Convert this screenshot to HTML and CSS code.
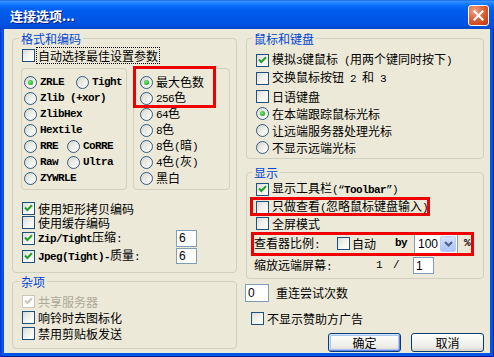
FILE: index.html
```html
<!DOCTYPE html>
<html lang="zh-CN">
<head>
<meta charset="utf-8">
<title>连接选项</title>
<link rel="stylesheet" href="styles.css">
</head>
<body>
<div class="win">
  <div class="titlebar">
    <span class="title-text">连接选项...</span>
    <span class="close"><svg width="11" height="11" viewBox="0 0 11 11"><path d="M1.5 1.5 L9.5 9.5 M9.5 1.5 L1.5 9.5" stroke="#fff" stroke-width="2.2" stroke-linecap="square"/></svg></span>
  </div>
  <div class="client">
    <div class="col">
      <fieldset class="grp g-fmt">
        <legend>格式和编码</legend>
        <div class="row r-auto"><span class="cb"></span><span class="lbl focus">自动选择最佳设置参数</span></div>
        <div class="boxes">
          <div class="ibox enc">
            <div class="rrow"><span class="ri w52"><span class="rb on"></span><span class="m b">ZRLE</span></span><span class="ri"><span class="rb"></span><span class="m b">Tight</span></span></div>
            <div class="rrow"><span class="ri"><span class="rb"></span><span class="m b">Zlib (+xor)</span></span></div>
            <div class="rrow"><span class="ri"><span class="rb"></span><span class="m b">ZlibHex</span></span></div>
            <div class="rrow"><span class="ri"><span class="rb"></span><span class="m b">Hextile</span></span></div>
            <div class="rrow"><span class="ri w43"><span class="rb"></span><span class="m b">RRE</span></span><span class="ri"><span class="rb"></span><span class="m b">CoRRE</span></span></div>
            <div class="rrow"><span class="ri w43"><span class="rb"></span><span class="m b">Raw</span></span><span class="ri"><span class="rb"></span><span class="m b">Ultra</span></span></div>
            <div class="rrow"><span class="ri"><span class="rb"></span><span class="m b">ZYWRLE</span></span></div>
          </div>
          <div class="ibox clr">
            <div class="rrow"><span class="ri"><span class="rb on"></span><span>最大色数</span></span></div>
            <div class="rrow"><span class="ri"><span class="rb"></span><span><span class="m">256</span>色</span></span></div>
            <div class="rrow"><span class="ri"><span class="rb"></span><span><span class="m">64</span>色</span></span></div>
            <div class="rrow"><span class="ri"><span class="rb"></span><span><span class="m">8</span>色</span></span></div>
            <div class="rrow"><span class="ri"><span class="rb"></span><span><span class="m">8</span>色<span class="m">(</span>暗<span class="m">)</span></span></span></div>
            <div class="rrow"><span class="ri"><span class="rb"></span><span><span class="m">4</span>色<span class="m">(</span>灰<span class="m">)</span></span></span></div>
            <div class="rrow"><span class="ri"><span class="rb"></span><span>黑白</span></span></div>
          </div>
        </div>
        <div class="row h16 mt10"><span class="cb"><svg width="11" height="11" viewBox="0 0 11 11"><path d="M2 4.5 L4.3 7 L9 2.3" fill="none" stroke="#21A121" stroke-width="2"/></svg></span><span class="lbl">使用矩形拷贝编码</span></div>
        <div class="row h13"><span class="cb"></span><span class="lbl">使用缓存编码</span></div>
        <div class="row h18"><span class="lblw"><span class="cb"><svg width="11" height="11" viewBox="0 0 11 11"><path d="M2 4.5 L4.3 7 L9 2.3" fill="none" stroke="#21A121" stroke-width="2"/></svg></span><span class="lbl"><span class="m b">Zip/Tight</span>压缩<span class="m">:</span></span></span><span class="inp w21">6</span></div>
        <div class="row h18"><span class="lblw"><span class="cb"><svg width="11" height="11" viewBox="0 0 11 11"><path d="M2 4.5 L4.3 7 L9 2.3" fill="none" stroke="#21A121" stroke-width="2"/></svg></span><span class="lbl"><span class="m b">Jpeg(Tight)-</span>质量<span class="m">:</span></span></span><span class="inp w21 h16i">6</span></div>
      </fieldset>
      <fieldset class="grp g-misc">
        <legend>杂项</legend>
        <div class="row h16"><span class="cb dis"><svg width="11" height="11" viewBox="0 0 11 11"><path d="M2 4.5 L4.3 7 L9 2.3" fill="none" stroke="#CAC8BB" stroke-width="2"/></svg></span><span class="lbl dtext">共享服务器</span></div>
        <div class="row h16"><span class="cb"></span><span class="lbl">响铃时去图标化</span></div>
        <div class="row h16"><span class="cb"></span><span class="lbl">禁用剪贴板发送</span></div>
      </fieldset>
    </div>
    <div class="col">
      <fieldset class="grp g-mouse">
        <legend>鼠标和键盘</legend>
        <div class="row h18"><span class="cb"><svg width="11" height="11" viewBox="0 0 11 11"><path d="M2 4.5 L4.3 7 L9 2.3" fill="none" stroke="#21A121" stroke-width="2"/></svg></span><span class="lbl">模拟<span class="m">3</span>键鼠标<span class="m"> (</span>用两个键同时按下<span class="m">)</span></span></div>
        <div class="row h18"><span class="cb"></span><span class="lbl">交换鼠标按钮<span class="m"> 2 </span>和<span class="m"> 3</span></span></div>
        <div class="row h18"><span class="cb"></span><span class="lbl">日语键盘</span></div>
        <div class="row h17"><span class="rb on"></span><span class="lbl">在本端跟踪鼠标光标</span></div>
        <div class="row h17"><span class="rb"></span><span class="lbl">让远端服务器处理光标</span></div>
        <div class="row h17"><span class="rb"></span><span class="lbl">不显示远端光标</span></div>
      </fieldset>
      <fieldset class="grp g-disp">
        <legend>显示</legend>
        <div class="row h18"><span class="cb"><svg width="11" height="11" viewBox="0 0 11 11"><path d="M2 4.5 L4.3 7 L9 2.3" fill="none" stroke="#21A121" stroke-width="2"/></svg></span><span class="lbl">显示工具栏<span class="m">(“</span><span class="m b">Toolbar</span><span class="m">”)</span></span></div>
        <div class="row h18"><span class="cb"></span><span class="lbl">只做查看<span class="m">(</span>忽略鼠标键盘输入<span class="m">)</span></span></div>
        <div class="row h15"><span class="cb"></span><span class="lbl">全屏模式</span></div>
        <div class="row h25 pl7">
          <span class="lab83">查看器比例<span class="m">:</span></span>
          <span class="cb"></span><span class="lbl auto">自动</span>
          <span class="m b by">by</span>
          <span class="sel"><span class="sel-v">100</span><span class="sel-b"><svg width="9" height="6" viewBox="0 0 9 6"><path d="M1 1 L4.5 4.5 L8 1" fill="none" stroke="#4D6185" stroke-width="2"/></svg></span></span>
          <span class="m b pct">%</span>
        </div>
        <div class="row h19 pl7">
          <span class="lab122">缩放远端屏幕<span class="m">:</span></span>
          <span class="m">1</span>
          <span class="m slash">/</span>
          <span class="inp w21 ml14">1</span>
        </div>
      </fieldset>
      <div class="row retry"><span class="inp w24">0</span><span class="retry-t">重连尝试次数</span></div>
      <div class="row sponsor"><span class="cb"></span><span class="lbl">不显示赞助方广告</span></div>
      <div class="btns"><span class="btn def">确定</span><span class="btn">取消</span></div>
    </div>
  </div>
  <div class="mark mk1"></div>
  <div class="mark mk2"></div>
  <div class="mark mk3"></div>
</div>
</body>
</html>
```

FILE: styles.css
```css
* { box-sizing: border-box; }
html, body { margin: 0; padding: 0; background: #ffffff; }
body {
  font: 12px/1 "Noto Sans CJK SC", "Noto Sans CJK JP", sans-serif;
  color: #000;
}
.win {
  position: relative;
  width: 494px;
  height: 357px;
  background: #0055E5;
  box-shadow: inset 1px 0 0 #0831D9, inset -1px 0 0 #001EA0, inset 0 -1px 0 #001EA0;
  display: flex;
  flex-direction: column;
  overflow: hidden;
}
.titlebar {
  height: 29px;
  flex: none;
  display: flex;
  align-items: center;
  justify-content: space-between;
  padding: 0 5px 0 10px;
  background: linear-gradient(#0A5ADF 0px, #3D95FF 1px, #2E8BFF 2px, #127DFF 4px, #0568F6 7px, #005DEE 11px, #0058E8 16px, #0055E5 22px, #0050DC 26px, #0046CC 29px);
}
.title-text {
  color: #fff;
  font-weight: bold;
  font-size: 13px;
  text-shadow: 1px 1px 0 #0A1883;
  margin-top: 1px;
}
.close {
  width: 21px;
  height: 21px;
  margin-top: 2px;
  border: 1px solid #fff;
  border-radius: 3px;
  background: radial-gradient(circle at 30% 25%, #F0A486 0%, #E3673F 40%, #D2481E 75%, #B93A14 100%);
  display: flex;
  align-items: center;
  justify-content: center;
}
.close svg { display: block; }
.client {
  flex: 1;
  margin: 0 4px 4px 4px;
  background: #ECE9D8;
  display: grid;
  grid-template-columns: 225px 238px;
  column-gap: 9px;
  padding: 3px 6px 0 8px;
  align-items: start;
}
.col { display: flex; flex-direction: column; }
.grp {
  margin: 0;
  padding: 0;
  min-width: 0;
  border: 1px solid #D0D0BF;
  border-radius: 4px;
}
.grp legend {
  font-size: 12px;
  line-height: 13px;
  color: #0046D5;
  padding: 0 2px;
  margin-left: 6px;
}
.g-mouse legend, .g-disp legend { margin-left: 5px; }
.g-fmt { padding-bottom: 7px; }
.g-misc { margin-top: 2px; padding-top: 5px; padding-bottom: 7px; }
.g-mouse { padding-top: 6px; padding-bottom: 2px; }
.g-disp { margin-top: 7px; padding-top: 1px; padding-bottom: 3px; }

.row {
  display: flex;
  align-items: center;
  padding-left: 9px;
  white-space: nowrap;
}
.h13 { height: 13px; }
.h15 { height: 15px; }
.h16 { height: 16px; }
.h17 { height: 17px; }
.h18 { height: 18px; }
.h19 { height: 19px; }
.h25 { height: 25px; }
.mt10 { margin-top: 10px; }
.pl7 { padding-left: 7px; }
.r-auto { height: 15px; margin-top: 3px; }
.lbl { margin-left: 3px; line-height: 13px; }
.focus { outline: 1px dotted #000; outline-offset: 1px; margin-left: 3px; }
.dtext { color: #ACA899; }
.lblw { display: flex; align-items: center; width: 154px; }

.m {
  font-family: "Liberation Mono", monospace;
  font-size: 11px;
  letter-spacing: -0.6px;
}
.b { font-weight: bold; }

.cb {
  width: 13px;
  height: 13px;
  flex: none;
  border: 1px solid #1C5180;
  background: linear-gradient(135deg, #DCDCD7 0%, #F4F4F0 55%, #FFFFFF 100%);
  display: inline-flex;
  align-items: center;
  justify-content: center;
}
.cb svg { display: block; }
.cb.dis { border-color: #CAC8BB; background: #fff; }

.rb {
  width: 13px;
  height: 13px;
  flex: none;
  border-radius: 50%;
  border: 1px solid #2F5B87;
  background: linear-gradient(135deg, #D4D4CD 0%, #F0F0EA 55%, #FFFFFF 100%);
  display: inline-flex;
  align-items: center;
  justify-content: center;
}
.rb.on::after {
  content: "";
  width: 5px;
  height: 5px;
  border-radius: 50%;
  background: radial-gradient(circle at 40% 40%, #7AF07A 0%, #34C034 50%, #1A8E1A 100%);
}

.boxes {
  display: flex;
  gap: 6px;
  margin-top: 5px;
  padding-left: 8px;
}
.ibox {
  border: 1px solid #D0D0BF;
  border-radius: 4px;
  height: 122px;
  padding-top: 5px;
}
.enc { width: 106px; padding-left: 2px; }
.clr { width: 97px; padding-left: 6px; }
.rrow { height: 16px; display: flex; align-items: center; white-space: nowrap; }
.ri { display: inline-flex; align-items: center; gap: 2px; }
.ri .rb { margin-right: 1px; }
.w52 { width: 52px; }
.w43 { width: 43px; }

.inp {
  display: inline-flex;
  align-items: center;
  height: 17px;
  border: 1px solid #7F9DB9;
  background: #fff;
  padding-left: 2px;
  font-family: "Liberation Sans", sans-serif;
  font-size: 12px;
  flex: none;
}
.w21 { width: 21px; }
.w24 { width: 24px; height: 18px; }
.h16i { height: 16px; }
.ml14 { margin-left: 14px; }

.lab83 { width: 83px; }
.lab122 { width: 122px; }
.auto { margin-left: 2px; width: 24px; }
.by { margin-left: 19px; }
.sel {
  margin-left: 7px;
  width: 44px;
  height: 20px;
  border: 1px solid #7F9DB9;
  background: #fff;
  display: flex;
  align-items: center;
  justify-content: space-between;
  padding: 1px;
}
.sel-v { font-family: "Liberation Sans", sans-serif; font-size: 12px; padding-left: 2px; }
.sel-b {
  width: 16px;
  height: 100%;
  border-radius: 2px;
  background: linear-gradient(#D8E4FE, #BFD1FB 50%, #B0C6F7);
  border: 1px solid #B9CCF8;
  display: flex;
  align-items: center;
  justify-content: center;
}
.sel-b svg { display: block; }
.pct { margin-left: 6px; }
.slash { margin-left: 11px; }

.retry { margin-top: 5px; height: 18px; padding-left: 0; margin-left: -1px; }
.retry-t { margin-left: 7px; }
.sponsor { margin-top: 8px; height: 16px; padding-left: 5px; }
.btns {
  margin-top: 7px;
  display: flex;
  justify-content: flex-end;
  gap: 10px;
}
.btn {
  width: 73px;
  height: 19px;
  border: 1px solid #003C74;
  border-radius: 3px;
  background: linear-gradient(#FFFFFF 0%, #F6F6F3 35%, #EDECE7 75%, #D8D3C9 100%);
  display: flex;
  align-items: center;
  justify-content: center;
  font-size: 12px;
}
.btn.def {
  box-shadow: inset 1px 1px 0 #CEE7FF, inset -1px -1px 0 #6982EE, inset 0 0 0 2px #A9C5F5;
}

.mark {
  position: absolute;
  border: 3px solid #EE0000;
  pointer-events: none;
}
.mk1 { left: 133px; top: 66px; width: 83px; height: 42px; }
.mk2 { left: 250px; top: 197px; width: 180px; height: 19px; }
.mk3 { left: 251px; top: 232px; width: 223px; height: 24px; }
```
